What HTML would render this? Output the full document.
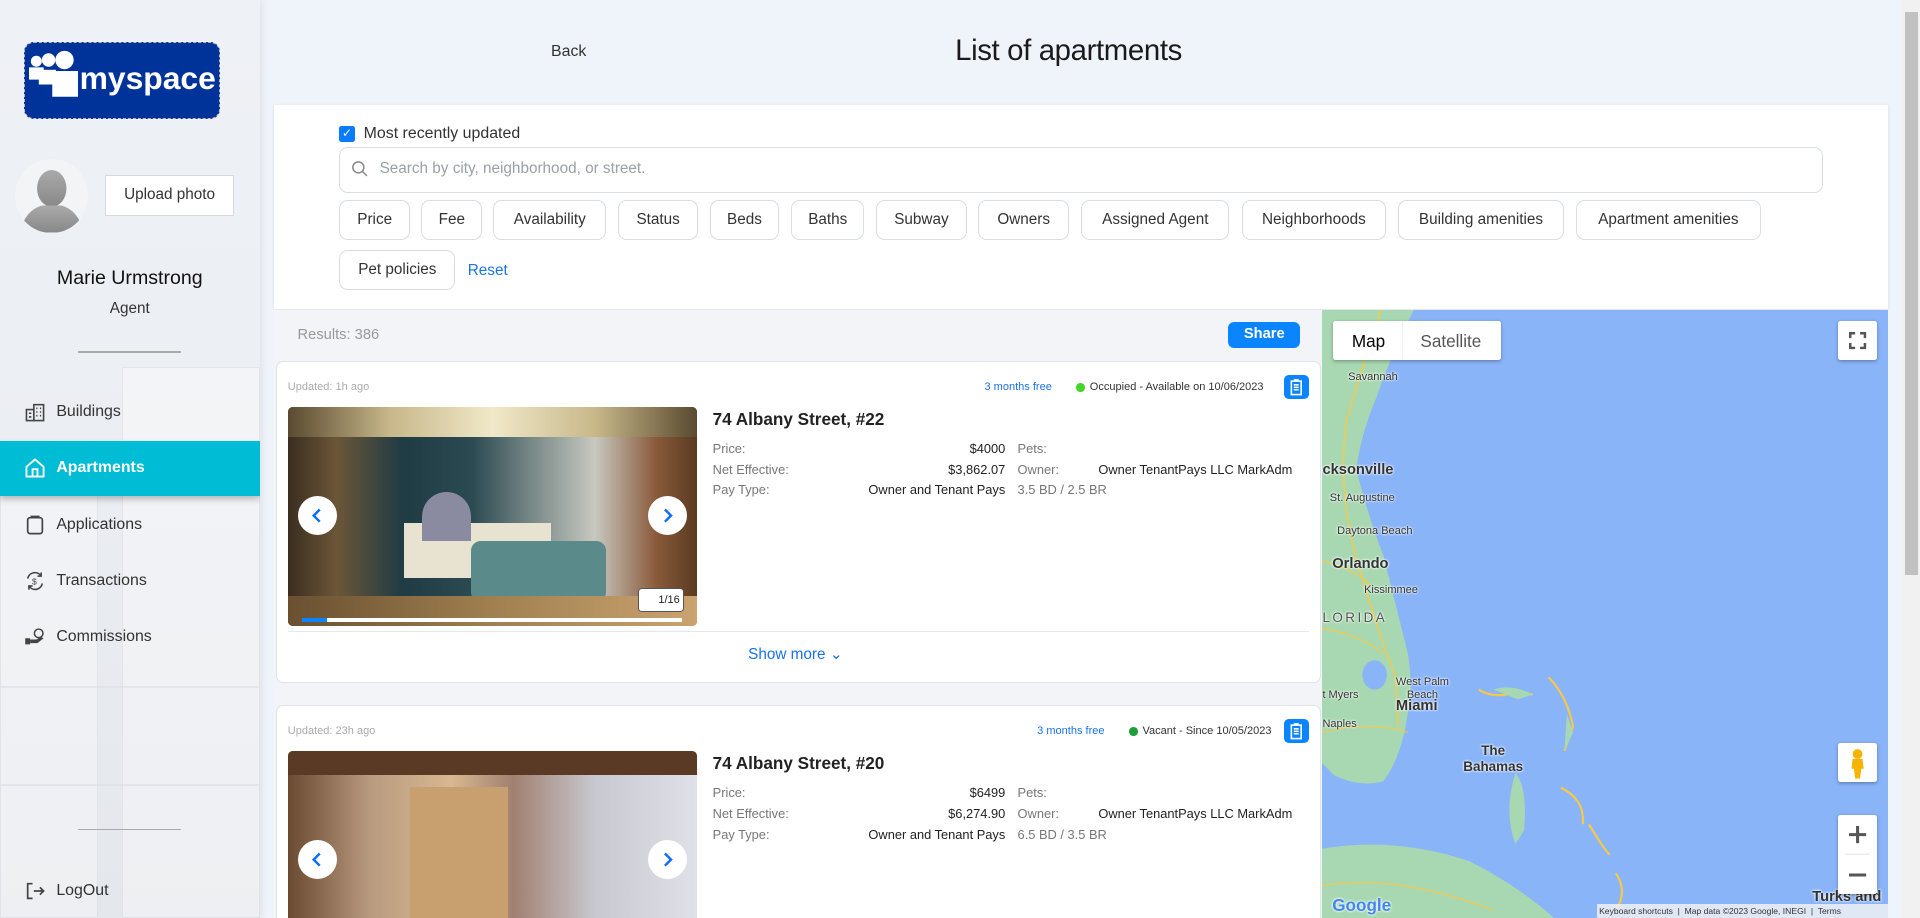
<!DOCTYPE html>
<html><head><meta charset="utf-8">
<style>
*{box-sizing:border-box;margin:0;padding:0}
html,body{width:1920px;height:918px;overflow:hidden;background:#eef4fa}
#w{zoom:1.2244898;width:1568px;height:750px;position:relative;font-family:"Liberation Sans",sans-serif;color:#222;overflow:hidden;background:#eef4fa}
.abs{position:absolute}
#side{left:0;top:0;width:212px;height:750px;background:linear-gradient(180deg,#eef1f5 0%,#eceff3 40%,#e4e7ec 100%);box-shadow:2px 0 6px rgba(0,0,0,.08);overflow:hidden}
.bld{position:absolute;background:rgba(255,255,255,.35);border:1px solid rgba(210,214,220,.5)}
.nav{position:absolute;left:0;width:212px;height:45px;display:flex;align-items:center;font-size:13px;color:#333}
.nav svg{position:absolute;left:20px}
.nav span{position:absolute;left:46px}
.chip{position:absolute;height:33px;border:1px solid #d9dde3;border-radius:7px;font-size:12.5px;color:#333;display:flex;align-items:center;justify-content:center;background:#fff}
.card{position:absolute;left:225px;width:854px;background:#fff;border:1px solid #dfe3ea;border-radius:6px}
.lbl{font-size:10.5px;color:#777}
.val{font-size:10.5px;color:#222}
.arrow{position:absolute;width:32px;height:32px;border-radius:50%;background:#fff;display:flex;align-items:center;justify-content:center}
.mlbl{position:absolute;font-size:9px;color:#333;text-shadow:0 0 2px #fff,0 0 2px #fff;white-space:nowrap}
</style></head><body><div id="w">

<!-- sidebar -->
<div id="side" class="abs">
 <div class="bld" style="left:0;top:400px;width:80px;height:350px"></div>
 <div class="bld" style="left:100px;top:300px;width:112px;height:450px"></div>
 <div class="bld" style="left:0;top:560px;width:212px;height:2px"></div>
 <div class="bld" style="left:0;top:640px;width:212px;height:2px"></div>
 <div class="abs" style="left:20px;top:34px;width:160px;height:63px;background:#003399;border-radius:8px;border:1px dashed #bbb"></div>
 <svg class="abs" style="left:24px;top:40px" width="44" height="52" viewBox="0 0 44 52"><g fill="#fff"><circle cx="6" cy="10" r="4.5"/><circle cx="16" cy="9" r="5.5"/><circle cx="29" cy="9" r="7.5"/><rect x="0" y="15" width="12" height="10"/><rect x="8" y="17" width="14" height="12"/><rect x="19" y="18" width="21" height="21"/></g></svg>
 <div class="abs" style="left:65px;top:49px;font-size:26px;font-weight:bold;color:#fff">myspace</div>
 <div class="abs" style="left:12px;top:130px;width:60px;height:60px;border-radius:50%;background:#f3f4f6;overflow:hidden">
  <svg width="60" height="60" viewBox="0 0 60 60"><defs><linearGradient id="g" x1="0" y1="0" x2="0" y2="1"><stop offset="0" stop-color="#aaa"/><stop offset="1" stop-color="#888"/></linearGradient></defs><ellipse cx="30" cy="24" rx="12" ry="15" fill="url(#g)"/><path d="M4 60 Q8 42 22 38 L38 38 Q52 42 56 60Z" fill="url(#g)"/></svg>
 </div>
 <div class="abs" style="left:86px;top:143px;width:105px;height:33px;background:#fff;border:1px solid #d6dae0;font-size:12.5px;display:flex;align-items:center;justify-content:center;color:#333">Upload photo</div>
 <div class="abs" style="left:0;width:212px;top:218px;text-align:center;font-size:16px;color:#111">Marie Urmstrong</div>
 <div class="abs" style="left:0;width:212px;top:245px;text-align:center;font-size:12.5px;color:#333">Agent</div>
 <div class="abs" style="left:64px;top:287px;width:84px;height:1px;background:#aaa"></div>
 <div class="nav" style="top:314px"><svg width="18" height="18" viewBox="0 0 18 18" fill="none" stroke="#444" stroke-width="1.3"><rect x="2" y="7" width="6" height="9"/><rect x="8" y="3" width="8" height="13"/><path d="M10 6h1M13 6h1M10 9h1M13 9h1M10 12h1M13 12h1M4 10h2M4 13h2"/></svg><span>Buildings</span></div>
 <div class="nav" style="top:360px;background:#00bcd4;color:#fff;box-shadow:0 3px 5px rgba(0,0,0,.25)"><svg width="18" height="18" viewBox="0 0 18 18" fill="none" stroke="#fff" stroke-width="1.5"><path d="M2 8 L9 2 L16 8 V16 H2Z"/><rect x="7" y="10" width="4" height="6"/></svg><span style="font-weight:bold">Apartments</span></div>
 <div class="nav" style="top:406px"><svg width="18" height="18" viewBox="0 0 18 18" fill="none" stroke="#444" stroke-width="1.4"><rect x="3" y="3" width="12" height="13" rx="2"/><path d="M6 3V2h6v1"/></svg><span>Applications</span></div>
 <div class="nav" style="top:452px"><svg width="18" height="18" viewBox="0 0 18 18" fill="none" stroke="#444" stroke-width="1.3"><path d="M3 7a6 6 0 0 1 11-2M15 11a6 6 0 0 1-11 2M14 2v3h-3M4 16v-3h3"/><text x="6.5" y="12" font-size="7" fill="#444" stroke="none">$</text></svg><span>Transactions</span></div>
 <div class="nav" style="top:498px"><svg width="18" height="18" viewBox="0 0 18 18" fill="#444"><rect x="1" y="10" width="4" height="5"/><path d="M5 11h5l4-2 2 1-5 4H5z"/><circle cx="12" cy="6" r="3.5" fill="none" stroke="#444" stroke-width="1.2"/></svg><span>Commissions</span></div>
 <div class="abs" style="left:64px;top:677px;width:84px;height:1px;background:#aaa"></div>
 <div class="nav" style="top:705px"><svg width="18" height="18" viewBox="0 0 18 18" fill="none" stroke="#444" stroke-width="1.4"><path d="M7 3H3v12h4M8 9h8M13 6l3 3-3 3"/></svg><span>LogOut</span></div>
</div>

<!-- header -->
<div class="abs" style="left:450px;top:35px;font-size:13px;color:#333">Back</div>
<div class="abs" style="left:780px;top:28px;font-size:24px;color:#1a1a1a;letter-spacing:-0.3px">List of apartments</div>

<!-- filters -->
<div class="abs" style="left:224px;top:86px;width:1318px;height:166px;background:#fff;box-shadow:0 1px 3px rgba(0,0,0,.1)"></div>
<div class="abs" style="left:277px;top:103px;width:13px;height:13px;background:#0a7cff;border-radius:2px;color:#fff;font-size:10px;line-height:13px;text-align:center">✓</div>
<div class="abs" style="left:297px;top:102px;font-size:13px;color:#333">Most recently updated</div>
<div class="abs" style="left:277px;top:120px;width:1212px;height:38px;border:1px solid #d9dde3;border-radius:7px"></div>
<svg class="abs" style="left:287px;top:131px" width="14" height="14" viewBox="0 0 14 14" fill="none" stroke="#888" stroke-width="1.2"><circle cx="6" cy="6" r="4.5"/><path d="M9.5 9.5L13 13"/></svg>
<div class="abs" style="left:310px;top:131px;font-size:12.5px;color:#9aa0a8">Search by city, neighborhood, or street.</div>
<div class="chip" style="left:277px;top:163px;width:58px">Price</div>
<div class="chip" style="left:344px;top:163px;width:50px">Fee</div>
<div class="chip" style="left:403px;top:163px;width:92px">Availability</div>
<div class="chip" style="left:505px;top:163px;width:65px">Status</div>
<div class="chip" style="left:580px;top:163px;width:56px">Beds</div>
<div class="chip" style="left:646px;top:163px;width:60px">Baths</div>
<div class="chip" style="left:715px;top:163px;width:75px">Subway</div>
<div class="chip" style="left:799px;top:163px;width:74px">Owners</div>
<div class="chip" style="left:883px;top:163px;width:121px">Assigned Agent</div>
<div class="chip" style="left:1014px;top:163px;width:118px">Neighborhoods</div>
<div class="chip" style="left:1142px;top:163px;width:135px">Building amenities</div>
<div class="chip" style="left:1287px;top:163px;width:151px">Apartment amenities</div>
<div class="chip" style="left:277px;top:204px;width:95px">Pet policies</div>
<div class="abs" style="left:382px;top:214px;font-size:12.5px;color:#1a73e8">Reset</div>

<!-- results bar -->
<div class="abs" style="left:224px;top:253px;width:856px;height:497px;background:#f2f4f8"></div>
<div class="abs" style="left:243px;top:267px;font-size:12px;color:#999">Results: 386</div>
<div class="abs" style="left:1003px;top:263px;width:59px;height:21px;background:#0a84ff;border-radius:5px;color:#fff;font-size:12px;font-weight:bold;text-align:center;line-height:21px">Share</div>

<!-- card 1 -->
<div class="card" style="top:295px;height:263px"></div>
<div class="abs" style="left:235px;top:311px;font-size:9px;color:#aaa">Updated: 1h ago</div>
<div class="abs" style="left:804px;top:311px;font-size:9px;color:#1a73e8">3 months free</div>
<div class="abs" style="left:879px;top:313px;width:7px;height:7px;border-radius:50%;background:#44d62c"></div>
<div class="abs" style="left:890px;top:311px;font-size:9px;color:#333">Occupied - Available on 10/06/2023</div>
<div class="abs" style="left:1049px;top:306px;width:20px;height:20px;background:#0a84ff;border-radius:4px"><svg width="20" height="20" viewBox="0 0 20 20" fill="none" stroke="#fff" stroke-width="1.3"><rect x="6" y="5" width="8" height="11"/><path d="M8 4h4M8 8h4M8 10h4M8 12h4"/></svg></div>
<div class="abs" style="left:235px;top:332px;width:334px;height:179px;border-radius:4px;overflow:hidden;background:linear-gradient(90deg,#3a2e20 0%,#6b5638 12%,#1f3b44 28%,#2c4a52 45%,#7a8a88 60%,#c8c8c0 75%,#8a5a3a 90%,#5a3a20 100%)">
 <div class="abs" style="left:0;top:0;width:334px;height:25px;background:linear-gradient(90deg,#5a4a30,#c8b88a,#f0e8c8,#c8b88a,#5a4a30)"></div>
 <div class="abs" style="left:95px;top:95px;width:120px;height:45px;background:#e8e2d0"></div>
 <div class="abs" style="left:110px;top:70px;width:40px;height:40px;background:#8a8aa0;border-radius:20px 20px 0 0"></div>
 <div class="abs" style="left:150px;top:110px;width:110px;height:50px;background:#5a8a8a;border-radius:8px"></div>
 <div class="abs" style="left:0;top:155px;width:334px;height:24px;background:linear-gradient(90deg,#6a5030,#a08050,#caa370)"></div>
 <div class="abs" style="left:12px;top:173px;width:310px;height:3px;background:#fff"></div>
 <div class="abs" style="left:12px;top:173px;width:20px;height:3px;background:#0a84ff"></div>
 <div class="abs" style="left:286px;top:148px;width:38px;height:20px;background:#fff;border:1px solid #555;border-radius:3px;font-size:9px;line-height:18px;text-align:right;padding-right:3px">1/16</div>
</div>
<div class="arrow" style="left:243px;top:405px"><svg width="12" height="14" viewBox="0 0 12 14"><path d="M8 2L3 7l5 5" fill="none" stroke="#0a6cff" stroke-width="2"/></svg></div>
<div class="arrow" style="left:529px;top:405px"><svg width="12" height="14" viewBox="0 0 12 14"><path d="M4 2l5 5-5 5" fill="none" stroke="#0a6cff" stroke-width="2"/></svg></div>
<div class="abs" style="left:582px;top:334px;font-size:14px;font-weight:bold;color:#222">74 Albany Street, #22</div>
<div class="abs lbl" style="left:582px;top:360px">Price:</div><div class="abs val" style="left:700px;width:121px;text-align:right;top:360px">$4000</div><div class="abs lbl" style="left:831px;top:360px">Pets:</div>
<div class="abs lbl" style="left:582px;top:377px">Net Effective:</div><div class="abs val" style="left:700px;width:121px;text-align:right;top:377px">$3,862.07</div><div class="abs lbl" style="left:831px;top:377px">Owner:</div><div class="abs val" style="left:897px;top:377px">Owner TenantPays LLC MarkAdm</div>
<div class="abs lbl" style="left:582px;top:394px">Pay Type:</div><div class="abs val" style="left:680px;width:141px;text-align:right;top:394px">Owner and Tenant Pays</div><div class="abs lbl" style="left:831px;top:394px">3.5 BD / 2.5 BR</div>
<div class="abs" style="left:235px;top:515px;width:834px;height:1px;background:#e4e7ec"></div>
<div class="abs" style="left:611px;top:527px;font-size:12.5px;color:#1a73e8">Show more ⌄</div>

<!-- card 2 -->
<div class="card" style="top:576px;height:180px"></div>
<div class="abs" style="left:235px;top:592px;font-size:9px;color:#aaa">Updated: 23h ago</div>
<div class="abs" style="left:847px;top:592px;font-size:9px;color:#1a73e8">3 months free</div>
<div class="abs" style="left:922px;top:594px;width:7px;height:7px;border-radius:50%;background:#1e9e3a"></div>
<div class="abs" style="left:933px;top:592px;font-size:9px;color:#333">Vacant - Since 10/05/2023</div>
<div class="abs" style="left:1049px;top:587px;width:20px;height:20px;background:#0a84ff;border-radius:4px"><svg width="20" height="20" viewBox="0 0 20 20" fill="none" stroke="#fff" stroke-width="1.3"><rect x="6" y="5" width="8" height="11"/><path d="M8 4h4M8 8h4M8 10h4M8 12h4"/></svg></div>
<div class="abs" style="left:235px;top:613px;width:334px;height:137px;border-radius:4px 4px 0 0;overflow:hidden;background:linear-gradient(90deg,#6a4a30 0%,#b89a80 20%,#d8b890 40%,#a08070 55%,#c8c8d0 75%,#e0e0e8 100%)">
 <div class="abs" style="left:0;top:0;width:334px;height:20px;background:#5a3a25"></div>
 <div class="abs" style="left:100px;top:30px;width:80px;height:110px;background:#c8a070"></div>
</div>
<div class="arrow" style="left:243px;top:686px"><svg width="12" height="14" viewBox="0 0 12 14"><path d="M8 2L3 7l5 5" fill="none" stroke="#0a6cff" stroke-width="2"/></svg></div>
<div class="arrow" style="left:529px;top:686px"><svg width="12" height="14" viewBox="0 0 12 14"><path d="M4 2l5 5-5 5" fill="none" stroke="#0a6cff" stroke-width="2"/></svg></div>
<div class="abs" style="left:582px;top:615px;font-size:14px;font-weight:bold;color:#222">74 Albany Street, #20</div>
<div class="abs lbl" style="left:582px;top:641px">Price:</div><div class="abs val" style="left:700px;width:121px;text-align:right;top:641px">$6499</div><div class="abs lbl" style="left:831px;top:641px">Pets:</div>
<div class="abs lbl" style="left:582px;top:658px">Net Effective:</div><div class="abs val" style="left:700px;width:121px;text-align:right;top:658px">$6,274.90</div><div class="abs lbl" style="left:831px;top:658px">Owner:</div><div class="abs val" style="left:897px;top:658px">Owner TenantPays LLC MarkAdm</div>
<div class="abs lbl" style="left:582px;top:675px">Pay Type:</div><div class="abs val" style="left:680px;width:141px;text-align:right;top:675px">Owner and Tenant Pays</div><div class="abs lbl" style="left:831px;top:675px">6.5 BD / 3.5 BR</div>

<!-- map -->
<div class="abs" style="left:1080px;top:253px;width:462px;height:497px;background:#8ab4f8;overflow:hidden">
 <svg width="462" height="497" viewBox="0 0 462 497">
  <path d="M0 0 H75 Q55 40 45 70 Q32 100 28 130 Q38 170 50 200 Q60 240 70 280 Q75 310 70 330 Q65 365 50 385 Q30 390 10 380 L0 370Z" fill="#a8d8b2"/>
  <ellipse cx="43" cy="298" rx="10" ry="12" fill="#8ab4f8"/>
  <path d="M0 440 Q60 430 120 450 Q160 470 190 497 H0Z" fill="#a8d8b2"/>
  <path d="M48 0 Q35 40 20 90 Q12 150 30 210 Q45 260 60 300 L62 340" fill="none" stroke="#f5c84a" stroke-width="1.2"/>
  <path d="M0 260 Q30 265 50 280 M0 205 Q25 210 40 225 M0 345 Q40 335 70 345 M0 470 Q60 460 140 490" fill="none" stroke="#f5c84a" stroke-width="1"/>
  <path d="M128 310 Q140 318 160 312 L172 314 M185 300 Q200 315 205 340 L198 360 M195 390 Q215 400 213 420 M218 420 Q230 440 235 445 M240 460 Q250 475 240 490" fill="none" stroke="#f5c84a" stroke-width="1.8"/>
  <path d="M140 310 Q155 305 172 314 L160 318Z M200 330 L205 345 L198 360Z" fill="#a8d8b2"/>
  <path d="M158 378 Q168 390 165 425 L158 436 Q148 410 158 378Z" fill="#a8d8b2"/>
 </svg>
 <div class="mlbl" style="left:21px;top:50px">Savannah</div>
 <div class="mlbl" style="left:0;top:124px;font-size:12px;font-weight:bold">cksonville</div>
 <div class="mlbl" style="left:6px;top:149px">St. Augustine</div>
 <div class="mlbl" style="left:12px;top:176px">Daytona Beach</div>
 <div class="mlbl" style="left:8px;top:201px;font-size:12px;font-weight:bold">Orlando</div>
 <div class="mlbl" style="left:34px;top:224px">Kissimmee</div>
 <div class="mlbl" style="left:0;top:245px;font-size:11px;letter-spacing:2px;color:#555">LORIDA</div>
 <div class="mlbl" style="left:60px;top:299px;line-height:11px;text-align:center">West Palm<br>Beach</div>
 <div class="mlbl" style="left:0;top:310px">t Myers</div>
 <div class="mlbl" style="left:0;top:333px">Naples</div>
 <div class="mlbl" style="left:60px;top:317px;font-size:12px;font-weight:bold">Miami</div>
 <div class="mlbl" style="left:115px;top:354px;font-size:11px;font-weight:bold;text-align:center;line-height:13px">The<br>Bahamas</div>
 <div class="mlbl" style="left:400px;top:473px;font-size:12px;font-weight:bold">Turks and</div>
 <div class="mlbl" style="left:8px;top:478px;font-size:14px;font-weight:bold;color:#4285f4">Google</div>
 <div class="abs" style="left:224px;top:485px;width:238px;height:12px;background:rgba(245,245,245,.8);font-size:7px;color:#333;line-height:12px;white-space:nowrap">&nbsp;Keyboard shortcuts &nbsp;|&nbsp; Map data ©2023 Google, INEGI &nbsp;|&nbsp; Terms</div>
 <div class="abs" style="left:9px;top:9px;width:137px;height:32px;background:#fff;box-shadow:0 1px 3px rgba(0,0,0,.3);border-radius:2px;font-size:14px">
  <span class="abs" style="left:15px;top:8px;color:#000">Map</span><span class="abs" style="left:56px;top:0;width:1px;height:32px;background:#eee"></span><span class="abs" style="left:71px;top:8px;color:#555">Satellite</span></div>
 <div class="abs" style="left:421px;top:9px;width:32px;height:32px;background:#fff;box-shadow:0 1px 3px rgba(0,0,0,.3);border-radius:2px"><svg width="32" height="32" viewBox="0 0 32 32" fill="none" stroke="#555" stroke-width="2"><path d="M10 14v-4h4M18 10h4v4M22 18v4h-4M14 22h-4v-4"/></svg></div>
 <div class="abs" style="left:421px;top:354px;width:32px;height:32px;background:#fff;box-shadow:0 1px 3px rgba(0,0,0,.3);border-radius:2px"><svg width="32" height="32" viewBox="0 0 32 32" fill="#f5b400"><circle cx="16" cy="9" r="4"/><path d="M12 13h8l1 8h-2l-1 8h-4l-1-8h-2z"/></svg></div>
 <div class="abs" style="left:421px;top:413px;width:32px;height:64px;background:#fff;box-shadow:0 1px 3px rgba(0,0,0,.3);border-radius:2px"><svg width="32" height="64" viewBox="0 0 32 64" stroke="#555" stroke-width="2.5"><path d="M9 16h14M16 9v14M9 49h14"/><path d="M6 32h20" stroke="#e6e6e6" stroke-width="1"/></svg></div>
</div>

<!-- scrollbar -->
<div class="abs" style="left:1553px;top:0;width:15px;height:750px;background:#f1f1f1"></div>
<div class="abs" style="left:1556px;top:10px;width:10px;height:460px;background:#c1c1c1"></div>
</div></body></html>
